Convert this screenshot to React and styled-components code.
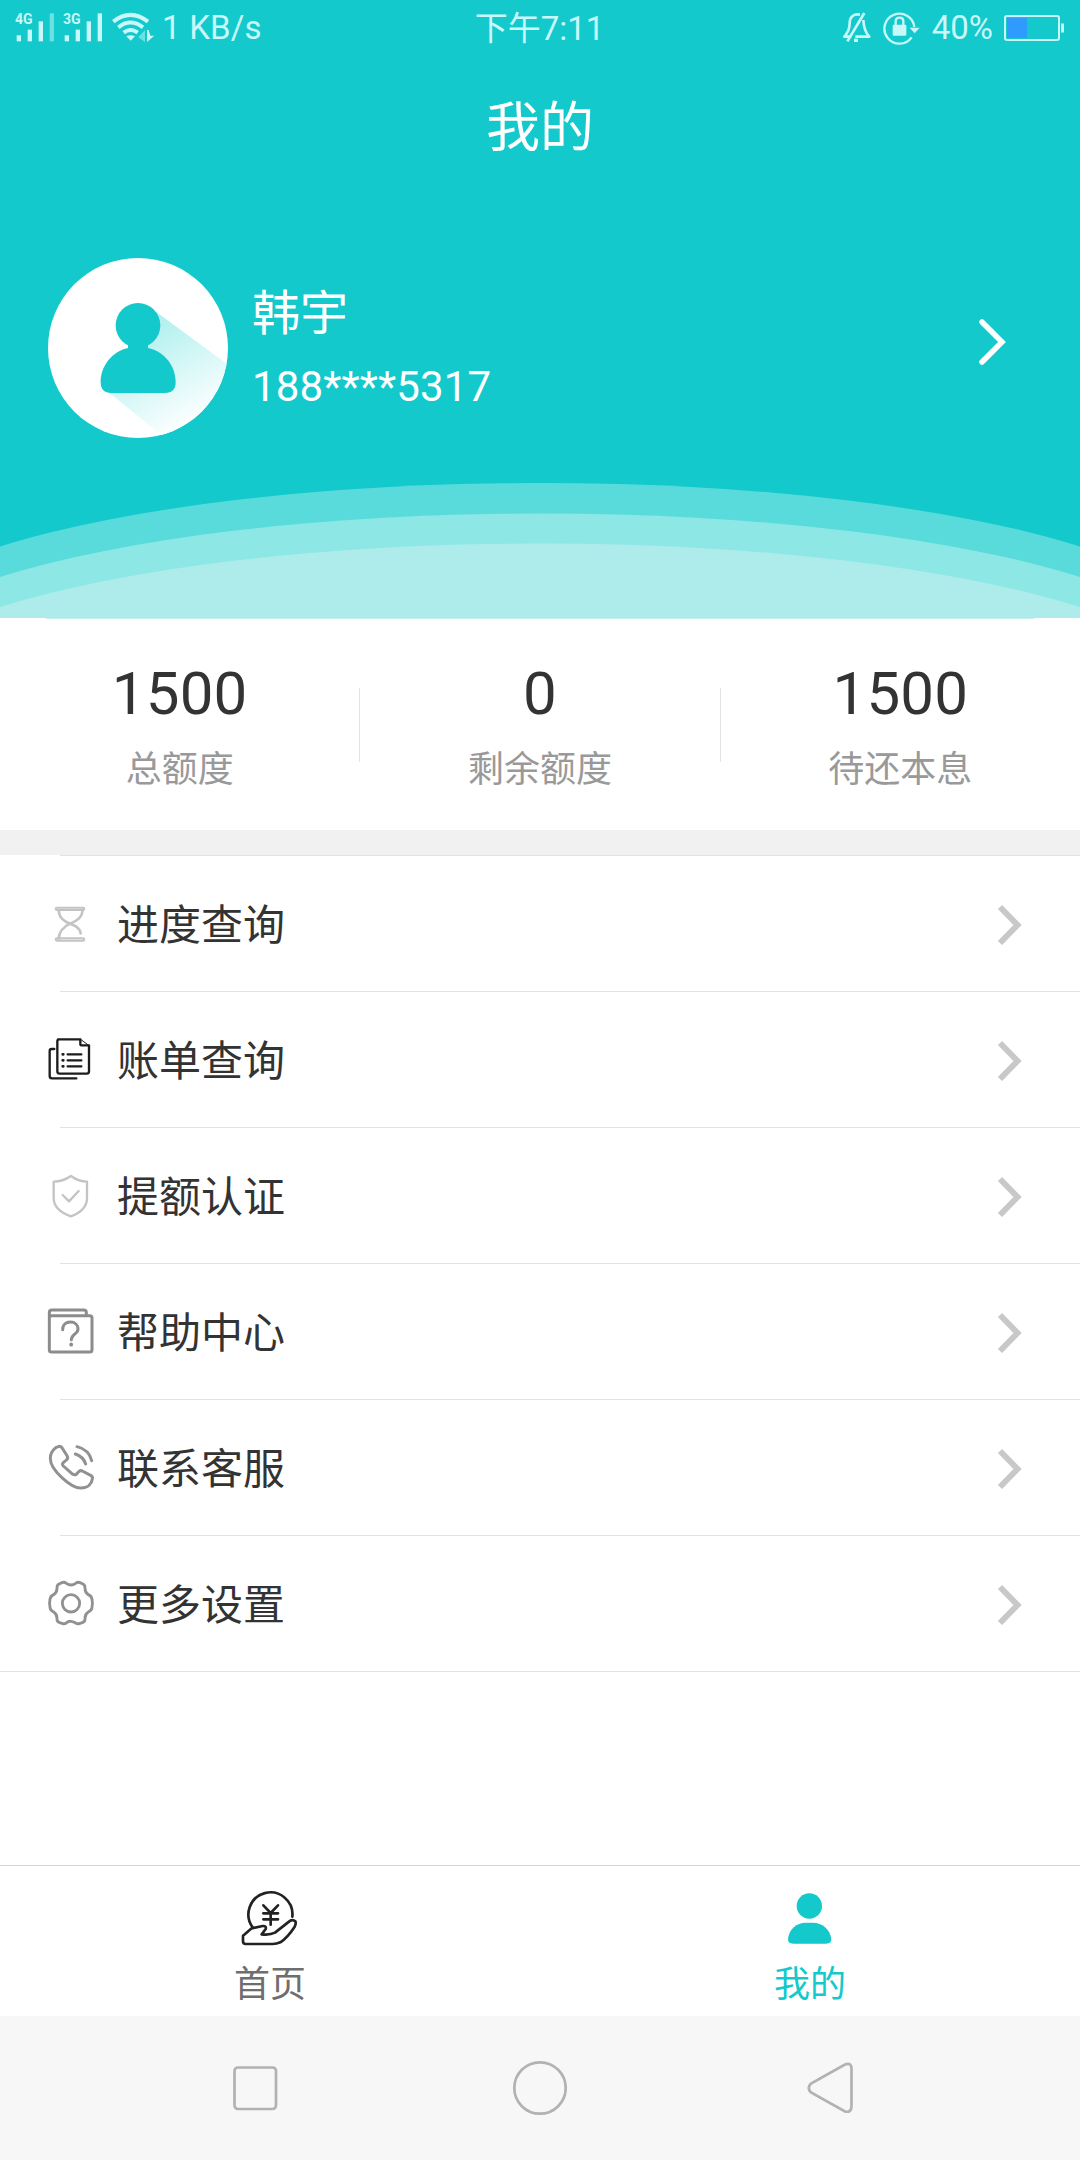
import styled, { createGlobalStyle } from 'styled-components'

const GlobalStyle = createGlobalStyle`
* {
box-sizing: border-box;
}
body {
margin: 0;
background: #fff;
font-family: Roboto, "Noto Sans CJK SC", sans-serif;
}
svg {
display: block;
flex: none;
}
`
const Screen = styled.div`
width: 1080px;
height: 2160px;
display: flex;
flex-direction: column;
background: #fff;
overflow: hidden;
`
const Header = styled.header`
height: 618px;
display: flex;
flex-direction: column;
background: #13c9cc;
color: #fff;
`
const StatusBar = styled.div`
height: 56px;
padding: 0 16px 0 15px;
display: grid;
grid-template-columns: 1fr auto 1fr;
align-items: center;
font-size: 33px;
line-height: 54px;
color: #c8f8fa;
`
const Clock = styled.div`
padding-top: 2px;
`
const StatusGroup = styled.div`
display: flex;
align-items: center;
gap: ${prop => prop.$end ? 10 : 0}px;
justify-content: ${prop => prop.$end ? 'flex-end' : 'flex-start'};
`
const Percent = styled.span`
margin: 0 1px;
`
const Speed = styled.span`
margin-left: 5px;
letter-spacing: 0.2px;
`
const Title = styled.h1`
height: 140px;
margin: 0;
padding-bottom: 6px;
display: flex;
justify-content: center;
align-items: center;
font-size: 54px;
font-weight: 400;
`
const Profile = styled.div`
height: 287px;
padding: 62px 74px 0 48px;
display: flex;
align-items: flex-start;
`
const ProfileText = styled.div`
flex: 1;
padding: 26px 0 0 24px;
display: flex;
flex-direction: column;
`
const Name = styled.div`
font-size: 48px;
line-height: 60px;
`
const Phone = styled.div`
margin-top: 13px;
font-size: 42px;
line-height: 60px;
letter-spacing: 0.15px;
`
const ProfileArrow = styled.div`
padding-top: 60px;
`
const StatsTop = styled.div`
height: 1px;
margin: 0 46px;
background: #c9eeee;
`
const Stats = styled.section`
height: 211px;
display: flex;
align-items: center;
`
const Stat = styled.div`
flex: 1;
height: 100%;
padding-top: 39px;
display: flex;
flex-direction: column;
align-items: center;
`
const StatValue = styled.div`
font-size: 60px;
line-height: 72px;
letter-spacing: 0.2px;
color: #333;
`
const StatLabel = styled.div`
margin-top: 13px;
font-size: 36px;
line-height: 54px;
color: #999;
`
const StatLine = styled.div`
width: 1px;
height: 74px;
background: #e4e4e4;
`
const Gap = styled.div`
height: 25px;
background: #f1f1f1;
`
const Menu = styled.nav`
display: flex;
flex-direction: column;
`
const Line = styled.div`
height: 1px;
margin-left: ${prop => prop.$full ? 0 : 60}px;
background: #e2e2e2;
`
const MenuItem = styled.div`
height: 135px;
padding: 0 55px 0 46px;
display: flex;
align-items: center;
`
const MenuLabel = styled.span`
flex: 1;
margin-left: 22px;
padding-top: 5px;
font-size: 42px;
line-height: 62px;
color: #333;
`
const TabBar = styled.div`
height: 151px;
margin-top: auto;
display: flex;
border-top: 1px solid #d6d6d6;
`
const Tab = styled.div`
flex: 1;
padding-top: 21px;
display: flex;
flex-direction: column;
align-items: center;
font-size: 36px;
color: ${prop => prop.$active ? '#13c9cc' : '#6e6e6e'};
span {
    margin-top: 5px;
    line-height: 54px;
}
`
const SystemNav = styled.div`
height: 144px;
padding-left: 228px;
display: flex;
align-items: center;
background: #f7f7f7;
svg + svg {
    margin-left: 225px;
}
`

function Signal({ label, weak }) {
  return (
    <svg width="47.500" height="32" viewBox="0 0 142.500 96" fill="currentColor">
      <text x="0" y="36" fontSize="42" fontWeight="700">{label}</text>
      <rect x="5" y="70" width="13" height="18" />
      <rect x="38" y="53" width="13" height="35" />
      <rect x="71" y="28" width="13" height="60" />
      <rect x="104" y="4" width="13" height="84" opacity={weak ? 0.5 : 1} />
    </svg>
  )
}

function Wifi() {
  return (
    <svg width="47" height="32" viewBox="-3 0 141 96" fill="none" stroke="currentColor" strokeWidth="12">
      <path d="M7 29Q58 -12 111 29" />
      <path d="M22 46Q58 17 96 46" />
      <path d="M38 62Q59 46 80 62" />
      <path d="M46 73Q59 66 72 73L59 86Z" fill="currentColor" stroke="none" />
      <path d="M82 76L102 54V90Z" fill="currentColor" stroke="none" opacity=".5" />
      <path d="M108 54V90L130 71H118L113 54Z" fill="currentColor" stroke="none" />
    </svg>
  )
}

function BellOff() {
  return (
    <svg width="31" height="32" viewBox="0 0 93 96" fill="none" stroke="currentColor" strokeWidth="8" strokeLinejoin="round">
      <path d="M54 8C36 4 23 14 23 34C23 52 18 62 7 74H28" />
      <path d="M64 24C65 46 68 60 82 74H40" />
      <path d="M67 3L16 88" />
      <path d="M36 85H48" strokeWidth="10" />
    </svg>
  )
}

function RotateLock() {
  return (
    <svg width="38" height="34" viewBox="0 0 114 102" fill="none" stroke="currentColor" strokeWidth="7">
      <path d="M86 79A45 45 0 1 1 94 48" />
      <path d="M80 50H110L95 67Z" fill="currentColor" stroke="none" />
      <rect x="29" y="41" width="41" height="33" rx="3" fill="currentColor" stroke="none" />
      <path d="M38 42V31Q38 20 49.500 20T61 31V42" />
    </svg>
  )
}

function Battery() {
  return (
    <svg width="60" height="26" viewBox="0 0 60 26">
      <rect x="1" y="1" width="54" height="24" rx="2" fill="none" stroke="currentColor" strokeWidth="2" />
      <rect x="3" y="3" width="20" height="20" fill="#2f9bff" />
      <rect x="57" y="8.500" width="3" height="9" fill="currentColor" />
    </svg>
  )
}

function Avatar() {
  return (
    <svg width="180" height="180" viewBox="0 0 540 540">
      <defs>
        <linearGradient id="shade" gradientUnits="userSpaceOnUse" x1="290" y1="230" x2="440" y2="500">
          <stop offset="0" stopColor="#b5f1f0" />
          <stop offset="1" stopColor="#fff" />
        </linearGradient>
        <clipPath id="round"><circle cx="270" cy="270" r="270" /></clipPath>
      </defs>
      <circle cx="270" cy="270" r="270" fill="#fff" />
      <path d="M325 162L560 335V540H350L175 397Z" fill="url(#shade)" clipPath="url(#round)" />
      <circle cx="270" cy="202" r="67" fill="#13c9cc" />
      <path d="M240 255H300V270C350 280 383 325 383 372Q383 405 350 405H190Q158 405 158 372C158 325 192 280 240 270Z" fill="#13c9cc" />
    </svg>
  )
}

function Waves() {
  return (
    <svg width="1080" height="135" viewBox="0 0 1080 135">
      <path d="M0 63.500A670 155.500 0 0 1 1080 63.500V135H0Z" fill="#59dbdb" />
      <path d="M0 94A670 155.500 0 0 1 1080 94V135H0Z" fill="#8ce7e5" />
      <path d="M0 124A670 155.500 0 0 1 1080 124V135H0Z" fill="#aeebeb" />
    </svg>
  )
}

// every menu icon is drawn in a 49x50 box, 3 units to a pixel
const icons = {
  hourglass: (
    <g stroke="#c4c4c4" strokeWidth="8">
      <rect x="29" y="27" width="86" height="7" rx="3.500" strokeWidth="6" />
      <rect x="29" y="119" width="86" height="7" rx="3.500" strokeWidth="6" />
      <path d="M38 34C39 59 55 68 72 75C92 68 109 58 110 34M38 120C40 94 55 83 72 75C90 81 103 90 104 104" />
    </g>
  ),
  bill: (
    <g stroke="#1d1d1f" strokeWidth="7">
      <path d="M36 14H103V29Q103 32 106 32H129V110Q129 117 122 117H41Q34 117 34 110V20Q34 14 40 14Z" />
      <path d="M104 14L129 33" strokeWidth="3" />
      <path d="M25 43H17Q11 43 11 49V124Q11 131 18 131H91" />
      <path d="M65 59H106M65 77H106M65 95H106" />
      <path d="M50 59H52M50 77H52M50 95H52" strokeWidth="8" />
    </g>
  ),
  shield: (
    <g stroke="#c4c4c4" strokeWidth="7">
      <path d="M75 16Q98 33 123 33V82C123 110 99 128 75 137C49 128 23 110 23 82V33Q50 33 75 16Z" />
      <path d="M50 73L69 92L98 61" />
    </g>
  ),
  help: (
    <g stroke="#8c8c8c" strokeWidth="9">
      <rect x="10" y="27" width="128" height="109" rx="7" />
      <path d="M10 30V18Q10 10 18 10H113Q121 10 121 18V26" />
      <path d="M50 69C50 53 61 46 73 46C87 46 96 55 96 67C96 83 76 82 76 99" />
      <path d="M75.500 113V114" strokeWidth="11" />
    </g>
  ),
  phone: (
    <g stroke="#919191" strokeWidth="9">
      <path d="M31 14L39 11Q46 11 50 18L64 41Q67 47 61 52L52 60Q47 65 52 70L78 93Q85 98 91 95L98 87Q102 82 109 85L134 98Q141 102 139 109C137 124 125 136 105 136C75 137 13 81 13 48Q13 26 31 14Z" />
      <path d="M88 34C104 39 114 48 119 64M93 12C117 18 132 33 137 54" />
    </g>
  ),
  gear: (
    <g stroke="#919191" strokeWidth="8.500">
      <path d="M61 14Q68 19 75 19T89 14Q95 9 102 12L111 16Q118 20 117 29Q117 42 127 48Q137 52 138 62Q141 74 138 86Q137 96 127 100Q117 106 117 119Q118 127 111 131L102 134Q95 137 89 133T75 128T61 133Q55 137 48 134L39 131Q32 127 33 119Q33 106 23 100Q13 96 12 86Q9 74 12 62Q13 52 23 48Q33 42 33 29Q32 20 39 16L48 12Q55 9 61 14Z" />
      <circle cx="75" cy="74" r="26" />
    </g>
  ),
}

function MenuIcon({ name }) {
  return (
    <svg width="49" height="50" viewBox="0 1 147 150" fill="none" strokeLinecap="round" strokeLinejoin="round">
      {icons[name]}
    </svg>
  )
}

function Arrow() {
  return (
    <svg width="28" height="44" viewBox="0 0 28 44" fill="none" stroke="#c8c8c8" strokeWidth="6">
      <path d="M3 5L20.500 23L3 41" />
    </svg>
  )
}

const stats = [
  ['1500', '总额度'],
  ['0', '剩余额度'],
  ['1500', '待还本息'],
]
const menu = [
  ['hourglass', '进度查询'],
  ['bill', '账单查询'],
  ['shield', '提额认证'],
  ['help', '帮助中心'],
  ['phone', '联系客服'],
  ['gear', '更多设置'],
]

function App() {
  return (
    <Screen>
      <GlobalStyle />
      <Header>
        <StatusBar>
          <StatusGroup>
            <Signal label="4G" weak />
            <Signal label="3G" />
            <Wifi />
            <Speed>1 KB/s</Speed>
          </StatusGroup>
          <Clock>下午7:11</Clock>
          <StatusGroup $end>
            <BellOff />
            <RotateLock />
            <Percent>40%</Percent>
            <Battery />
          </StatusGroup>
        </StatusBar>
        <Title>我的</Title>
        <Profile>
          <Avatar />
          <ProfileText>
            <Name>韩宇</Name>
            <Phone>188****5317</Phone>
          </ProfileText>
          <ProfileArrow>
            <svg width="28" height="48" viewBox="0 0 28 48" fill="none" stroke="#fff" strokeWidth="5.500" strokeLinecap="round">
              <path d="M4 4L24 24L4 44" />
            </svg>
          </ProfileArrow>
        </Profile>
        <Waves />
      </Header>
      <StatsTop />
      <Stats>
        {stats.map(([value, label], i) => [
          i > 0 && <StatLine key={'l' + i} />,
          <Stat key={i}>
            <StatValue>{value}</StatValue>
            <StatLabel>{label}</StatLabel>
          </Stat>
        ])}
      </Stats>
      <Gap />
      <Menu>
        <Line />
        {menu.map(([icon, label], i) => [
          <MenuItem key={icon}>
            <MenuIcon name={icon} />
            <MenuLabel>{label}</MenuLabel>
            <Arrow />
          </MenuItem>,
          <Line key={'l' + i} $full={i === menu.length - 1} />
        ])}
      </Menu>
      <TabBar>
        <Tab>
          <svg width="60" height="66" viewBox="0 -2 180 198" fill="none" stroke="#222" strokeWidth="8" strokeLinecap="round" strokeLinejoin="round">
            <path d="M38 119A66 66 0 1 1 157 87" />
            <path d="M70 53L92 76L114 53M92 76V111M70 77H114M70 95H114" />
            <path d="M9 144L35 122L68 115Q80 114 77 124L65 140Q89 143 105 135L148 101Q158 94 166 101Q169 107 164 117C151 137 139 152 121 164Q110 169 98 169H17Q9 169 9 161Z" />
          </svg>
          <span>首页</span>
        </Tab>
        <Tab $active>
          <svg width="60" height="66" viewBox="0 0 180 198" fill="#13c9cc">
            <circle cx="88" cy="57" r="38" />
            <path d="M24 156C27 126 50 107 77 107H99C126 107 150 126 154 156Q155 170 138 170H40Q23 170 24 156Z" />
          </svg>
          <span>我的</span>
        </Tab>
      </TabBar>
      <SystemNav>
        <svg width="54" height="54" viewBox="0 0 54 54" fill="none" stroke="#b2b2b2" strokeWidth="2.700">
          <rect x="6.500" y="6.500" width="41.500" height="41.500" rx="3.500" />
        </svg>
        <svg width="60" height="60" viewBox="0 0 60 60" fill="none" stroke="#b2b2b2" strokeWidth="2.700">
          <circle cx="33" cy="30" r="25.700" />
        </svg>
        <svg width="64" height="60" viewBox="0 0 64 60" fill="none" stroke="#b2b2b2" strokeWidth="2.700">
          <path d="M19 25.500Q14.500 30 19 34.500L53 53.500Q59.500 55 59.500 48V11Q59.500 4 53 6.500Z" />
        </svg>
      </SystemNav>
    </Screen>
  )
}

export default App
